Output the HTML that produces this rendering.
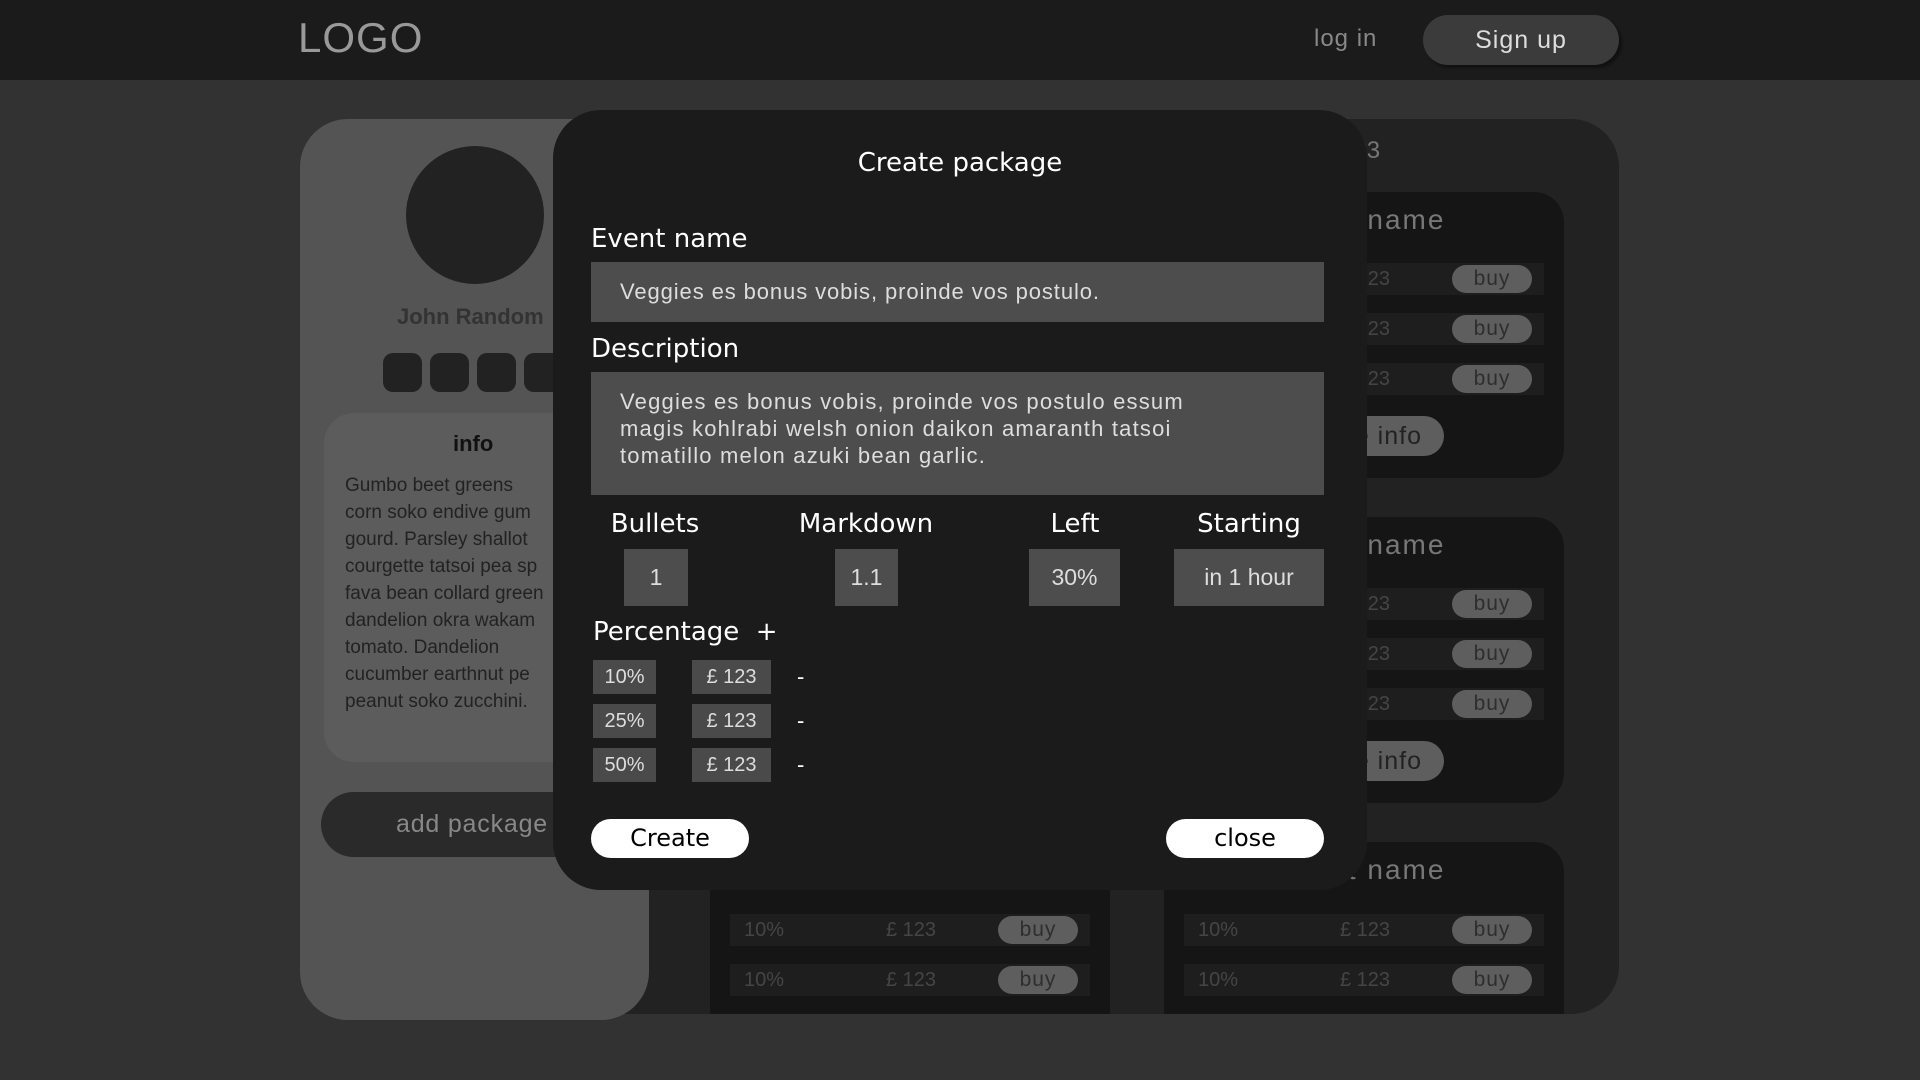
<!DOCTYPE html>
<html><head><meta charset="utf-8"><style>
*{margin:0;padding:0;box-sizing:border-box}
body{width:1920px;height:1080px;background:#323232;position:relative;overflow:hidden;font-family:"Liberation Sans",sans-serif}
.a{position:absolute}
.dv{font-family:"DejaVu Sans",sans-serif}
.hdr{left:0;top:0;width:1920px;height:80px;background:#1b1b1b}
.row{position:absolute;left:20px;width:360px;height:32px;background:#1e1e1e;color:#454545;font-size:20px;line-height:32px}
.row .p{position:absolute;left:14px}
.row .m{position:absolute;left:156px}
.buy{position:absolute;left:268px;top:2px;width:80px;height:28px;border-radius:14px;background:#5e5e5e;color:#2e2e2e;text-align:center;line-height:27px;font-size:21px;letter-spacing:1px}
.card{position:absolute;width:400px;background:#151515;border-radius:30px;overflow:hidden}
.nm{position:absolute;left:112px;top:12px;color:#777;font-size:28px;letter-spacing:2px}
.info{position:absolute;left:100px;width:180px;height:40px;border-radius:20px;background:#5e5e5e;color:#222;font-size:25px;line-height:40px;text-align:right;padding-right:22px;letter-spacing:1px}
.inp{position:absolute;background:#4d4d4d;color:#ddd;font-size:22px;letter-spacing:0.9px}
.lbl{position:absolute;color:#fff;font-size:26px;font-family:"DejaVu Sans",sans-serif}
.bx{position:absolute;background:#4d4d4d;color:#ddd;font-size:23px;text-align:center;line-height:57px;top:549px;height:57px}
.pb{position:absolute;background:#4a4a4a;color:#ddd;font-size:20px;text-align:center;height:34px;line-height:34px}
.btn{position:absolute;top:819px;width:158px;height:39px;border-radius:20px;background:#fff;color:#000;font-size:24px;text-align:center;line-height:39px;font-family:"DejaVu Sans",sans-serif}
</style></head><body>
<div class="a hdr"></div>
<div class="a" style="left:298px;top:14px;color:#999;font-size:42px;font-weight:300;letter-spacing:1px">LOGO</div>
<div class="a" style="left:1314px;top:25px;color:#888;font-size:24px;letter-spacing:1px">log in</div>
<div class="a" style="left:1423px;top:15px;width:196px;height:50px;border-radius:25px;background:#3b3b3b;box-shadow:3px 3px 2px #111;color:#ddd;font-size:25px;text-align:center;line-height:50px;letter-spacing:1px">Sign up</div>

<div class="a" style="left:560px;top:119px;width:1059px;height:895px;background:#222;border-radius:48px;overflow:hidden">
  <div class="a" style="left:760px;top:18px;color:#777;font-size:24px">£ 123</div>
  <div class="card" style="left:604px;top:73px;height:286px">
    <div class="nm">Event name</div>
    <div class="row" style="top:71px"><span class="p">10%</span><span class="m">£ 123</span><div class="buy">buy</div></div>
    <div class="row" style="top:121px"><span class="p">10%</span><span class="m">£ 123</span><div class="buy">buy</div></div>
    <div class="row" style="top:171px"><span class="p">10%</span><span class="m">£ 123</span><div class="buy">buy</div></div>
    <div class="info" style="top:224px">more info</div>
  </div>
  <div class="card" style="left:604px;top:398px;height:286px">
    <div class="nm">Event name</div>
    <div class="row" style="top:71px"><span class="p">10%</span><span class="m">£ 123</span><div class="buy">buy</div></div>
    <div class="row" style="top:121px"><span class="p">10%</span><span class="m">£ 123</span><div class="buy">buy</div></div>
    <div class="row" style="top:171px"><span class="p">10%</span><span class="m">£ 123</span><div class="buy">buy</div></div>
    <div class="info" style="top:224px">more info</div>
  </div>
  <div class="card" style="left:604px;top:723px;height:286px">
    <div class="nm">Event name</div>
    <div class="row" style="top:72px"><span class="p">10%</span><span class="m">£ 123</span><div class="buy">buy</div></div>
    <div class="row" style="top:122px"><span class="p">10%</span><span class="m">£ 123</span><div class="buy">buy</div></div>
    <div class="row" style="top:172px"><span class="p">10%</span><span class="m">£ 123</span><div class="buy">buy</div></div>
  </div>
  <div class="card" style="left:150px;top:723px;height:286px">
    <div class="nm">Event name</div>
    <div class="row" style="top:72px"><span class="p">10%</span><span class="m">£ 123</span><div class="buy">buy</div></div>
    <div class="row" style="top:122px"><span class="p">10%</span><span class="m">£ 123</span><div class="buy">buy</div></div>
    <div class="row" style="top:172px"><span class="p">10%</span><span class="m">£ 123</span><div class="buy">buy</div></div>
  </div>
</div>

<div class="a" style="left:300px;top:119px;width:349px;height:901px;background:#545454;border-radius:48px"></div>
<div class="a" style="left:406px;top:146px;width:138px;height:138px;border-radius:50%;background:#222"></div>
<div class="a" style="left:397px;top:304px;color:#333;font-size:22px;font-weight:bold;white-space:nowrap">John Random</div>
<div class="a" style="left:383px;top:353px;width:39px;height:39px;border-radius:10px;background:#222"></div>
<div class="a" style="left:430px;top:353px;width:39px;height:39px;border-radius:10px;background:#222"></div>
<div class="a" style="left:477px;top:353px;width:39px;height:39px;border-radius:10px;background:#222"></div>
<div class="a" style="left:524px;top:353px;width:39px;height:39px;border-radius:10px;background:#222"></div>
<div class="a" style="left:324px;top:413px;width:300px;height:349px;background:#5c5c5c;border-radius:30px"></div>
<div class="a" style="left:453px;top:431px;color:#111;font-size:22px;font-weight:bold">info</div>
<div class="a" style="left:345px;top:472px;white-space:nowrap;color:#222;font-size:19px;line-height:27px">Gumbo beet greens<br>corn soko endive gum<br>gourd. Parsley shallot<br>courgette tatsoi pea sp<br>fava bean collard green<br>dandelion okra wakam<br>tomato. Dandelion<br>cucumber earthnut pe<br>peanut soko zucchini.</div>
<div class="a" style="left:321px;top:792px;width:320px;height:65px;border-radius:33px;background:#2a2a2a;color:#888;font-size:25px;line-height:65px;padding-left:75px;letter-spacing:0.8px">add package</div>

<div class="a" style="left:553px;top:110px;width:814px;height:780px;background:#1b1b1b;border-radius:48px"></div>
<div class="a dv" style="left:553px;width:814px;top:148px;text-align:center;color:#fff;font-size:26px">Create package</div>
<div class="lbl" style="left:591px;top:224px">Event name</div>
<div class="inp" style="left:591px;top:262px;width:733px;height:60px;line-height:60px;padding-left:29px">Veggies es bonus vobis, proinde vos postulo.</div>
<div class="lbl" style="left:591px;top:334px">Description</div>
<div class="inp" style="left:591px;top:372px;width:733px;height:123px;line-height:27px;padding:16px 20px 0 29px;letter-spacing:1.2px">Veggies es bonus vobis, proinde vos postulo essum<br>magis kohlrabi welsh onion daikon amaranth tatsoi<br>tomatillo melon azuki bean garlic.</div>
<div class="lbl" style="left:555px;width:200px;text-align:center;top:509px">Bullets</div>
<div class="lbl" style="left:766px;width:200px;text-align:center;top:509px">Markdown</div>
<div class="lbl" style="left:975px;width:200px;text-align:center;top:509px">Left</div>
<div class="lbl" style="left:1149px;width:200px;text-align:center;top:509px">Starting</div>
<div class="bx" style="left:624px;width:64px">1</div>
<div class="bx" style="left:835px;width:63px">1.1</div>
<div class="bx" style="left:1029px;width:91px">30%</div>
<div class="bx" style="left:1174px;width:150px">in 1 hour</div>
<div class="lbl" style="left:593px;top:617px">Percentage &nbsp;+</div>
<div class="pb" style="left:593px;top:660px;width:63px">10%</div>
<div class="pb" style="left:692px;top:660px;width:79px">£ 123</div>
<div class="a" style="left:797px;top:660px;color:#fff;font-size:22px;line-height:34px">-</div>
<div class="pb" style="left:593px;top:704px;width:63px">25%</div>
<div class="pb" style="left:692px;top:704px;width:79px">£ 123</div>
<div class="a" style="left:797px;top:704px;color:#fff;font-size:22px;line-height:34px">-</div>
<div class="pb" style="left:593px;top:748px;width:63px">50%</div>
<div class="pb" style="left:692px;top:748px;width:79px">£ 123</div>
<div class="a" style="left:797px;top:748px;color:#fff;font-size:22px;line-height:34px">-</div>
<div class="btn" style="left:591px">Create</div>
<div class="btn" style="left:1166px">close</div>
</body></html>
